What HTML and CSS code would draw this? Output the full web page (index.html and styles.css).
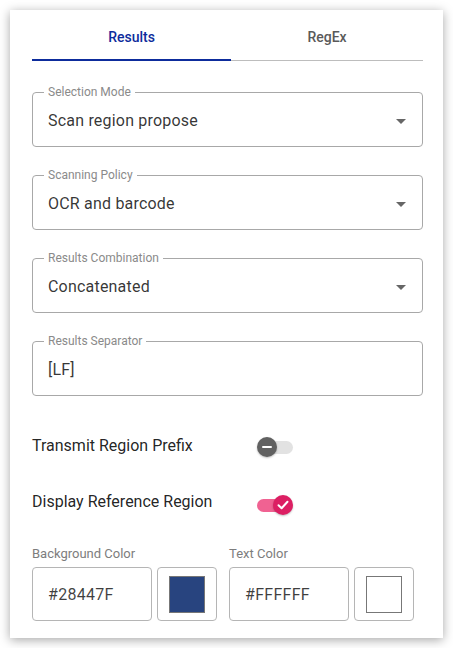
FILE: index.html
```html
<!DOCTYPE html>
<html lang="en">
<head>
<meta charset="utf-8">
<title>Settings</title>
<link rel="stylesheet" href="styles.css">
</head>
<body>
<div class="card">
  <div class="tabs">
    <div class="tab active">Results</div>
    <div class="tab">RegEx</div>
  </div>

  <div class="fields">
    <fieldset class="field">
      <legend>Selection Mode</legend>
      <div class="value"><span>Scan region propose</span><span class="arrow"></span></div>
    </fieldset>
    <fieldset class="field">
      <legend>Scanning Policy</legend>
      <div class="value"><span>OCR and barcode</span><span class="arrow"></span></div>
    </fieldset>
    <fieldset class="field">
      <legend>Results Combination</legend>
      <div class="value"><span>Concatenated</span><span class="arrow"></span></div>
    </fieldset>
    <fieldset class="field">
      <legend>Results Separator</legend>
      <div class="value"><span>[LF]</span></div>
    </fieldset>
  </div>

  <div class="toggles">
    <div class="toggle-row">
      <span class="toggle-label">Transmit Region Prefix</span>
      <span class="switch off"><span class="track"></span><span class="thumb"><span class="minus"></span></span></span>
    </div>
    <div class="toggle-row second">
      <span class="toggle-label">Display Reference Region</span>
      <span class="switch on"><span class="track"></span><span class="thumb">
        <svg width="14" height="14" viewBox="0 0 14 14"><path d="M2.5 7.2 L5.6 10.2 L11.5 3.8" fill="none" stroke="#fff" stroke-width="2" stroke-linecap="round" stroke-linejoin="round"/></svg>
      </span></span>
    </div>
  </div>

  <div class="colors">
    <div class="color-group">
      <div class="color-label">Background Color</div>
      <div class="color-inputs">
        <div class="hex">#28447F</div>
        <div class="swatch-box"><span class="swatch bg"></span></div>
      </div>
    </div>
    <div class="color-group">
      <div class="color-label">Text Color</div>
      <div class="color-inputs">
        <div class="hex">#FFFFFF</div>
        <div class="swatch-box"><span class="swatch fg"></span></div>
      </div>
    </div>
  </div>
</div>
</body>
</html>
```

FILE: styles.css
```css
* { box-sizing: border-box; }

html, body {
  margin: 0;
  padding: 0;
  background: #ffffff;
}

body {
  font-family: Roboto, "Liberation Sans", Arial, sans-serif;
  color: rgba(0, 0, 0, 0.87);
}

.card {
  margin: 10px;
  width: 433px;
  height: 628px;
  background: #fff;
  box-shadow: 0 2px 10px rgba(0, 0, 0, 0.35);
  padding: 0 20px 0 22px;
}

.tabs {
  display: grid;
  grid-template-columns: 199px 1fr;
  border-bottom: 1px solid #bdbdbd;
}

.tab {
  text-align: center;
  font-size: 14px;
  font-weight: 500;
  line-height: 20px;
  padding: 17px 0 12px;
  color: #5a5a5a;
  border-bottom: 2px solid transparent;
  margin-bottom: -1px;
}

.tab.active {
  color: #0d2c9c;
  border-bottom-color: #0d2c9c;
}

.fields {
  margin-top: 24px;
  display: flex;
  flex-direction: column;
  gap: 21px;
}

.field {
  margin: 0;
  border: 1px solid #a8a8a8;
  border-radius: 4px;
  padding: 10px 16px 13px 15px;
  min-width: 0;
}

.field legend {
  font-size: 12px;
  line-height: 14px;
  color: #8a8a8a;
  padding: 0 4px;
  margin-left: -4px;
}

.value {
  display: flex;
  align-items: center;
  justify-content: space-between;
  font-size: 16px;
  line-height: 24px;
  letter-spacing: 0.2px;
  color: rgba(0, 0, 0, 0.8);
}

.arrow {
  width: 0;
  height: 0;
  border-left: 5px solid transparent;
  border-right: 5px solid transparent;
  border-top: 5px solid #666;
  margin-right: 0;
}

.toggles {
  margin-top: 38px;
  display: flex;
  flex-direction: column;
  gap: 32px;
}

.toggle-row {
  display: flex;
  align-items: center;
  height: 24px;
}

.toggle-label {
  width: 225px;
  font-size: 16px;
  line-height: 24px;
  color: rgba(0, 0, 0, 0.87);
}

.switch {
  position: relative;
  width: 36px;
  height: 20px;
  display: inline-block;
  margin-top: 2px;
}

.second .switch { margin-top: 5px; }

.track {
  position: absolute;
  left: 2px;
  right: 0;
  top: 4px;
  height: 13px;
  border-radius: 7px;
  background: #e2e2e2;
}

.thumb {
  position: absolute;
  top: 0;
  width: 20px;
  height: 20px;
  border-radius: 50%;
  display: flex;
  align-items: center;
  justify-content: center;
  box-shadow: 0 1px 2px rgba(0, 0, 0, 0.25);
}

.off .thumb {
  left: 0;
  background: #616161;
}

.minus {
  width: 10px;
  height: 2px;
  background: #fff;
  border-radius: 1px;
}

.on .track {
  background: #f06292;
  left: 0;
  right: 4px;
}

.on .thumb {
  left: 16px;
  background: #dc1f63;
}

.colors {
  margin-top: 32px;
  display: flex;
  gap: 12px;
}

.color-label {
  font-size: 13px;
  line-height: 16px;
  color: #7d7d7d;
  margin-bottom: 5px;
}

.color-inputs {
  display: flex;
  gap: 5px;
}

.hex {
  width: 120px;
  height: 54px;
  border: 1px solid #b5b5b5;
  border-radius: 4px;
  padding-left: 15px;
  display: flex;
  align-items: center;
  font-size: 16px;
  letter-spacing: 0.3px;
  color: rgba(0, 0, 0, 0.75);
}

.swatch-box {
  width: 60px;
  height: 54px;
  border: 1px solid #b5b5b5;
  border-radius: 4px;
  display: flex;
  align-items: center;
  justify-content: center;
}

.swatch {
  width: 36px;
  height: 37px;
  border: 1px solid #777;
}

.swatch.bg { background: #28447f; }
.swatch.fg { background: #ffffff; }
```
